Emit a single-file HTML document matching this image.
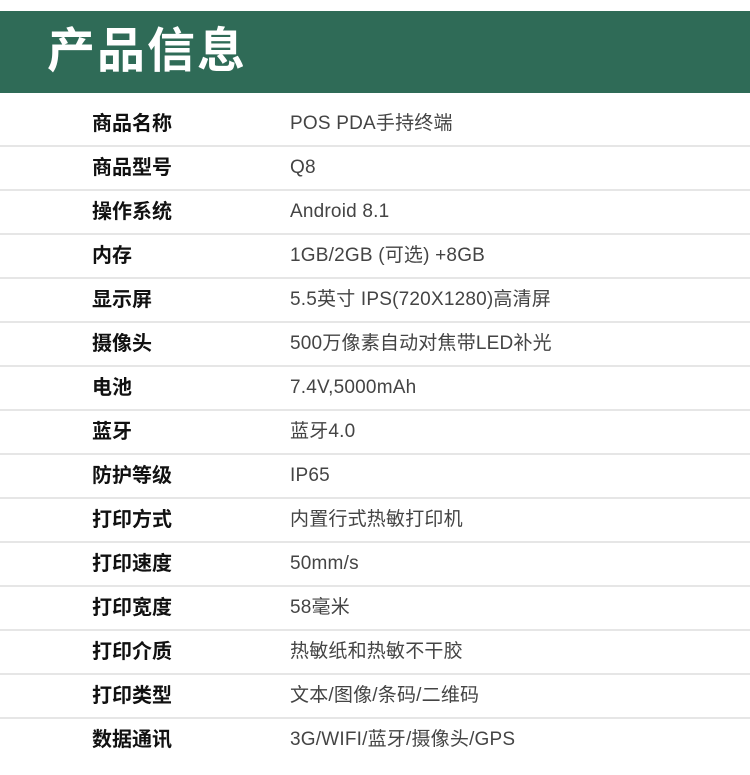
<!DOCTYPE html>
<html><head><meta charset="utf-8"><style>
body{margin:0;width:750px;height:775px;background:#fff;overflow:hidden;font-family:"Liberation Sans","Noto Sans CJK SC",sans-serif;}
.hd{position:absolute;left:0;top:11px;width:750px;height:82px;background:#2f6b57;}
.hd span{position:absolute;left:47px;top:11px;font-size:48px;font-weight:bold;color:#fff;line-height:60px;letter-spacing:2px;}
.rows{position:absolute;left:0;top:103px;width:750px;}
.r{position:relative;height:42px;border-bottom:2px solid #e6e6e6;box-sizing:content-box;}
.r:last-child{border-bottom:none}
.r b{position:absolute;left:92px;top:9px;font-size:20px;line-height:24px;color:#111;font-weight:bold;}
.r i{position:absolute;left:290px;top:9px;font-size:19px;line-height:24px;color:#444;font-style:normal;letter-spacing:0.2px;}
</style></head><body>
<div class="hd"><span>产品信息</span></div>
<div class="rows">
<div class="r"><b>商品名称</b><i>POS PDA手持终端</i></div>
<div class="r"><b>商品型号</b><i>Q8</i></div>
<div class="r"><b>操作系统</b><i>Android 8.1</i></div>
<div class="r"><b>内存</b><i>1GB/2GB (可选) +8GB</i></div>
<div class="r"><b>显示屏</b><i>5.5英寸 IPS(720X1280)高清屏</i></div>
<div class="r"><b>摄像头</b><i>500万像素自动对焦带LED补光</i></div>
<div class="r"><b>电池</b><i>7.4V,5000mAh</i></div>
<div class="r"><b>蓝牙</b><i>蓝牙4.0</i></div>
<div class="r"><b>防护等级</b><i>IP65</i></div>
<div class="r"><b>打印方式</b><i>内置行式热敏打印机</i></div>
<div class="r"><b>打印速度</b><i>50mm/s</i></div>
<div class="r"><b>打印宽度</b><i>58毫米</i></div>
<div class="r"><b>打印介质</b><i>热敏纸和热敏不干胶</i></div>
<div class="r"><b>打印类型</b><i>文本/图像/条码/二维码</i></div>
<div class="r"><b>数据通讯</b><i>3G/WIFI/蓝牙/摄像头/GPS</i></div>
</div>
</body></html>
